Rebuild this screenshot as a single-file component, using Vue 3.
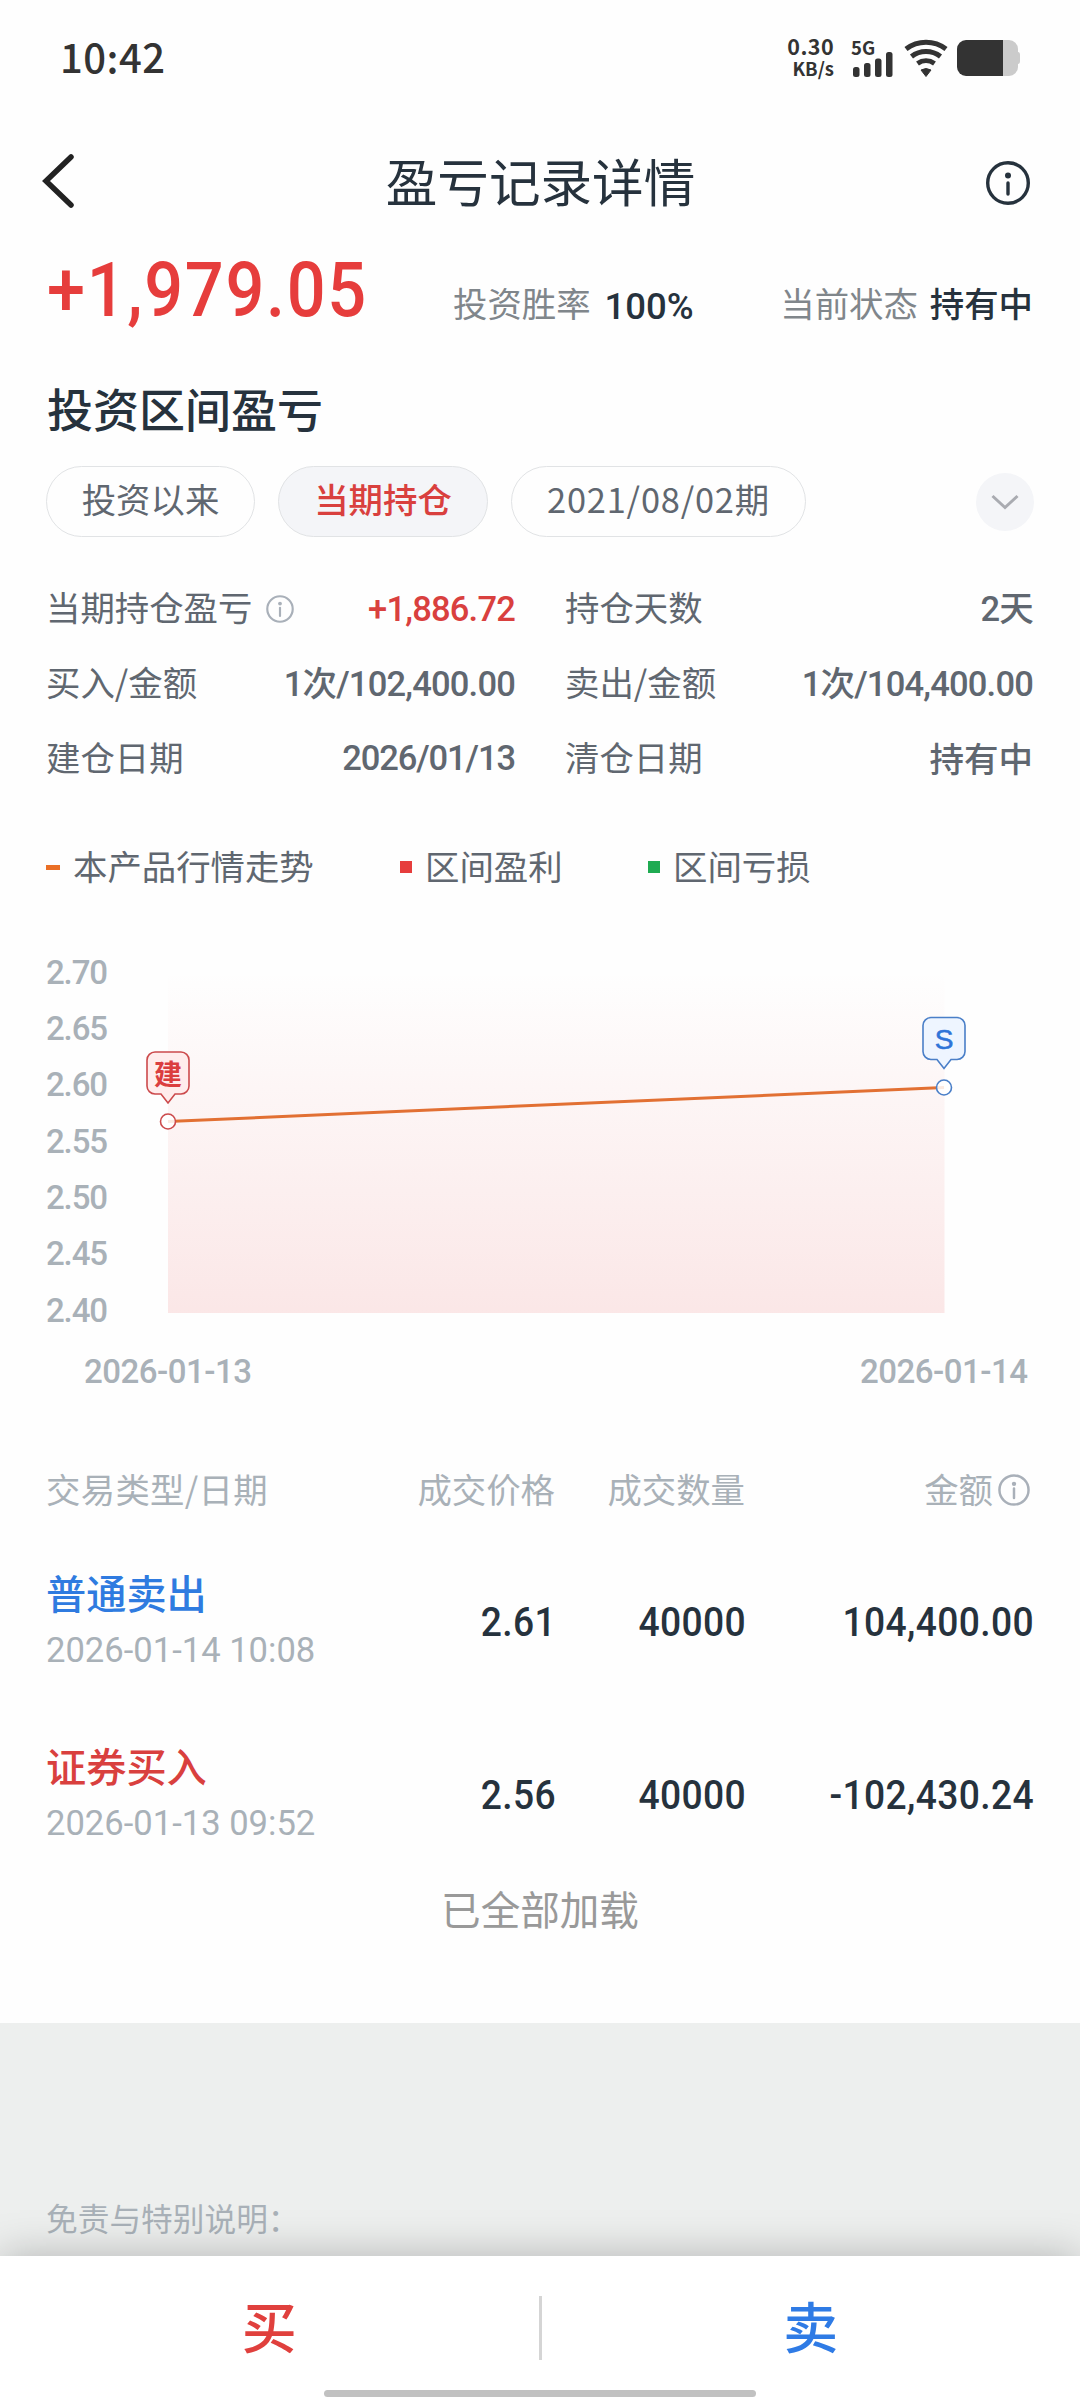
<template>
  <div class="page">
    <div class="status-bar">
      <span class="clock">10:42</span>
      <div class="speed">
        <span class="speed-num">0.30</span>
        <span class="speed-unit">KB/s</span>
      </div>
      <div class="signal">
        <span class="signal-type">5G</span>
        <svg width="42" height="40" viewBox="0 0 42 40">
          <rect x="2" y="29" width="6.500" height="10" rx="2.500" />
          <rect x="13" y="25" width="6.500" height="14" rx="2.500" />
          <rect x="24" y="20.500" width="6.500" height="18.500" rx="2.500" />
          <rect x="35" y="14" width="6.500" height="25" rx="2.500" />
        </svg>
      </div>
      <svg class="wifi" width="46" height="40" viewBox="0 0 46 40">
        <path d="M3 11a33 33 0 0 1 40 0M8.500 18.500a23.500 23.500 0 0 1 29 0M14.500 25.500a15 15 0 0 1 17 0" />
        <path class="wifi-dot" d="M18 32Q23 29 28 32L23 38.500Z" />
      </svg>
      <svg class="battery" width="64" height="36" viewBox="0 0 64 36">
        <path fill="#cbcbcb" d="M46 0h6a9 9 0 0 1 9 9v3q2 0 2 3v6q0 3-2 3v3a9 9 0 0 1-9 9h-6z" />
        <path fill="#333" d="M46 0H9a9 9 0 0 0-9 9v18a9 9 0 0 0 9 9h37z" />
      </svg>
    </div>

    <header class="nav">
      <svg class="back" width="34" height="56" viewBox="0 0 34 56">
        <path d="M30 4L5 28L30 52" />
      </svg>
      <h1>盈亏记录详情</h1>
      <svg class="info" width="44" height="44" viewBox="0 0 44 44">
        <circle cx="22" cy="22" r="20.300" />
        <path d="M22 22v11" />
        <circle class="dot" cx="22" cy="14.500" r="3" />
      </svg>
    </header>

    <section class="summary">
      <span class="total">+1,979.05</span>
      <span class="rate"><em>投资胜率</em><b>100%</b></span>
      <span class="state"><em>当前状态</em><b>持有中</b></span>
    </section>

    <h2>投资区间盈亏</h2>

    <div class="tabs">
      <span
        v-for="(tab, i) in tabs"
        :key="tab"
        class="tab"
        :class="{ active: i === current }"
        @click="current = i"
      >{{ tab }}</span>
      <span class="more">
        <svg width="30" height="16" viewBox="0 0 30 16"><path d="M2.500 2L15 13.500L27.500 2" /></svg>
      </span>
    </div>

    <div class="stats">
      <div v-for="item in stats" :key="item.label" class="stat">
        <span class="label">{{ item.label }}</span>
        <svg v-if="item.info" class="info small" width="28" height="28" viewBox="0 0 44 44">
          <circle cx="22" cy="22" r="20" />
          <path d="M22 20v13" />
          <circle class="dot" cx="22" cy="13.500" r="3" />
        </svg>
        <span class="value" :class="item.cls">{{ item.value }}</span>
      </div>
    </div>

    <div class="legend">
      <span class="trend"><i></i>本产品行情走势</span>
      <span class="profit"><i></i>区间盈利</span>
      <span class="loss"><i></i>区间亏损</span>
    </div>

    <svg class="chart" width="1080" height="460" viewBox="0 940 1080 460">
      <defs>
        <linearGradient id="area" x1="0" y1="0" x2="0" y2="1">
          <stop offset="0" stop-color="#e43c3c" stop-opacity="0" />
          <stop offset="1" stop-color="#e43c3c" stop-opacity="0.12" />
        </linearGradient>
      </defs>
      <rect x="168" y="970" width="776.500" height="343" fill="url(#area)" />
      <text
        v-for="(tick, i) in ticks"
        :key="tick"
        class="tick"
        x="46"
        :y="983.700 + i * 56.300"
        textLength="62"
      >{{ tick }}</text>
      <text class="tick" x="84" y="1383" textLength="168">2026-01-13</text>
      <text class="tick" x="860" y="1383" textLength="168">2026-01-14</text>
      <path class="line" d="M168 1121.500L944 1087.500" />
      <g class="buy">
        <circle cx="168" cy="1121.500" r="7.500" />
        <path d="M155 1052h26a8 8 0 0 1 8 8v26a8 8 0 0 1-8 8h-6l-7 9l-7-9h-6a8 8 0 0 1-8-8v-26a8 8 0 0 1 8-8z" />
        <text x="168" y="1085">建</text>
      </g>
      <g class="sell">
        <circle cx="944" cy="1087.500" r="7.500" />
        <path d="M931 1017.500h26a8 8 0 0 1 8 8v26a8 8 0 0 1-8 8h-6l-7 9l-7-9h-6a8 8 0 0 1-8-8v-26a8 8 0 0 1 8-8z" />
        <text x="944" y="1049">S</text>
      </g>
    </svg>

    <div class="table">
      <div class="row head">
        <span class="first">交易类型/日期</span>
        <span>成交价格</span>
        <span>成交数量</span>
        <span class="amount-head">金额
          <svg class="info small" width="32" height="32" viewBox="0 0 44 44">
            <circle cx="22" cy="22" r="20" />
            <path d="M22 20v13" />
            <circle class="dot" cx="22" cy="13.500" r="3" />
          </svg>
        </span>
      </div>
      <div v-for="row in rows" :key="row.time" class="row">
        <div class="first">
          <div class="name" :class="row.side">{{ row.name }}</div>
          <div class="time">{{ row.time }}</div>
        </div>
        <span class="num">{{ row.price }}</span>
        <span class="num">{{ row.count }}</span>
        <span class="num">{{ row.amount }}</span>
      </div>
      <div class="loaded">已全部加载</div>
    </div>

    <div class="notice">免责与特别说明：</div>

    <footer class="actions">
      <span class="buy-btn">买</span>
      <i></i>
      <span class="sell-btn">卖</span>
      <div class="home-bar"></div>
    </footer>
  </div>
</template>

<script setup>
import { ref } from 'vue';

const current = ref(1);
const tabs = ['投资以来', '当期持仓', '2021/08/02期'];

const stats = [
  { label: '当期持仓盈亏', value: '+1,886.72', info: true, cls: 'up' },
  { label: '持仓天数', value: '2天', cls: 'mixed' },
  { label: '买入/金额', value: '1次/102,400.00', cls: 'mixed' },
  { label: '卖出/金额', value: '1次/104,400.00', cls: 'mixed' },
  { label: '建仓日期', value: '2026/01/13', cls: 'date' },
  { label: '清仓日期', value: '持有中', cls: 'cjk' },
];

const ticks = ['2.70', '2.65', '2.60', '2.55', '2.50', '2.45', '2.40'];

const rows = [
  { name: '普通卖出', side: 'out', time: '2026-01-14 10:08', price: '2.61', count: '40000', amount: '104,400.00' },
  { name: '证券买入', side: 'in', time: '2026-01-13 09:52', price: '2.56', count: '40000', amount: '-102,430.24' },
];
</script>

<style>
body {
  margin: 0;
  background: #fefefe;
}
</style>

<style scoped>
.page {
  width: 1080px;
  height: 2400px;
  overflow: hidden;
  display: flex;
  flex-direction: column;
  background: #fefefe;
  color: #26323d;
  font-family: "Noto Sans CJK SC", sans-serif;
  font-size: 34.4px;
  white-space: nowrap;
}

.page svg {
  display: block;
  flex: none;
}

.status-bar {
  height: 116px;
  display: flex;
  align-items: center;
  padding: 0 59px 0 60px;
  color: #333;
}

.clock {
  font-size: 40px;
  line-height: 40px;
  font-weight: 500;
  letter-spacing: 0.5px;
  padding-bottom: 4px;
  flex: 1;
}

.speed {
  display: flex;
  flex-direction: column;
  align-items: flex-end;
  font-weight: 700;
  margin-right: 17px;
  padding-bottom: 3px;
}

.speed-num {
  font-size: 21.5px;
  line-height: 23px;
  letter-spacing: 0.4px;
}

.speed-unit {
  font-size: 18.5px;
  line-height: 22px;
}

.signal {
  position: relative;
  fill: #333;
  margin-right: 10px;
}

.signal-type {
  position: absolute;
  left: 0;
  top: -1px;
  font-size: 18.5px;
  line-height: 20px;
  font-weight: 700;
}

.wifi {
  fill: none;
  stroke: #333;
  stroke-width: 5;
  margin-right: 8px;
}

.wifi .wifi-dot {
  fill: #333;
  stroke-width: 1;
}

.nav {
  height: 134px;
  display: flex;
  align-items: center;
  padding: 0 50px 0 41px;
}

.back {
  fill: none;
  stroke: #222;
  stroke-width: 5.5;
  stroke-linecap: round;
  margin-top: -4px;
}

h1 {
  flex: 1;
  margin: -7px 0 0;
  padding-left: 20px;
  text-align: center;
  font-size: 51.6px;
  font-weight: 400;
  line-height: 60px;
}

.info {
  fill: none;
  stroke: #26323d;
  stroke-width: 3.4;
  stroke-linecap: round;
}

.info .dot {
  fill: #26323d;
  stroke: none;
}

.info.small {
  stroke: #a9b0b9;
}

.info.small .dot {
  fill: #a9b0b9;
}

.summary {
  height: 120px;
  display: flex;
  align-items: baseline;
  padding: 0 47px;
  line-height: 82px;
}

.total {
  font-family: Roboto, sans-serif;
  font-size: 76px;
  font-weight: 500;
  color: #e63d3c;
  letter-spacing: 1.9px;
  width: 406px;
  transform: translateY(-1px) scaleX(0.9);
  transform-origin: left;
}

.summary em {
  font-style: normal;
  color: #80868b;
  margin-right: 14px;
}

.summary b {
  font-weight: 500;
}

.rate b {
  display: inline-block;
  font-family: Roboto, sans-serif;
  font-size: 36.5px;
  transform: translateY(2px);
}

.state {
  margin-left: auto;
}

.state em {
  margin-right: 12px;
}

h2 {
  margin: 0;
  padding-left: 47px;
  font-size: 46px;
  font-weight: 500;
  height: 80px;
  line-height: 74px;
}

.tabs {
  display: flex;
  align-items: center;
  gap: 23px;
  margin-top: 16px;
  padding: 0 46px;
}

.tab {
  box-sizing: border-box;
  height: 71px;
  width: 209px;
  border: 1px solid #e1e3e5;
  border-radius: 36px;
  text-align: center;
  line-height: 63px;
  color: #606770;
}

.tab:nth-child(2) {
  width: 210px;
}

.tab:nth-child(3) {
  width: 295px;
  letter-spacing: 0.8px;
}

.tab.active {
  background: #f4f5f8;
  color: #d9403e;
  font-weight: 500;
}

.more {
  width: 58px;
  height: 58px;
  margin-left: auto;
  border-radius: 50%;
  background: #f4f5f8;
  display: flex;
  align-items: center;
  justify-content: center;
}

.more svg {
  fill: none;
  stroke: #a9abb1;
  stroke-width: 3;
}

.stats {
  display: grid;
  grid-template-columns: 469px 468px;
  column-gap: 50px;
  grid-auto-rows: 75px;
  margin-top: 33px;
  padding: 0 46px;
  color: #606770;
}

.stat {
  display: flex;
  align-items: center;
}

.stat .label {
  padding-bottom: 4px;
}

.stat .info {
  margin-left: 14px;
  margin-top: 3px;
}

.stat .value {
  margin-left: auto;
  font-family: Roboto, "Noto Sans CJK SC", sans-serif;
  font-size: 34.5px;
  font-weight: 500;
  letter-spacing: -0.8px;
}

.stat .up {
  color: #d9403e;
  padding-top: 2px;
}

.stat .mixed {
  padding-bottom: 3px;
}

.stat .date {
  letter-spacing: -1.1px;
  padding-top: 1px;
}

.stat .cjk {
  letter-spacing: 0;
  padding-bottom: 2px;
}

.legend {
  display: flex;
  height: 60px;
  align-items: center;
  margin-top: 40px;
  margin-bottom: 2px;
  padding-left: 46px;
  color: #606770;
}

.legend span {
  display: flex;
  align-items: center;
}

.legend i {
  width: 12px;
  height: 12px;
  margin-right: 13px;
  margin-top: 4px;
}

.trend {
  width: 354px;
}

.legend .trend i {
  width: 14px;
  height: 5px;
  background: #ea6f26;
}

.profit {
  width: 248px;
}

.profit i {
  background: #e63d3c;
}

.loss i {
  background: #1fab52;
}

.chart {
  margin-top: 43px;
}

.tick {
  font-family: Roboto, sans-serif;
  font-size: 33px;
  font-weight: 500;
  fill: #a9b1b8;
}

.line {
  fill: none;
  stroke: #e27033;
  stroke-width: 3;
}

.chart g {
  stroke-width: 1.6;
}

.chart .buy {
  stroke: #cc4a4c;
  fill: #ffecec;
}

.chart .sell {
  stroke: #4a7fc8;
  fill: #eef5ff;
}

.chart g circle {
  fill: #fff;
  fill-opacity: 0.85;
}

.chart g text {
  stroke: none;
  text-anchor: middle;
  font-size: 28px;
  font-weight: 700;
  fill: #db3e3f;
}

.chart g.sell text {
  font-family: "Liberation Sans", sans-serif;
  font-size: 28px;
  font-weight: 400;
  fill: #2f74d8;
  stroke: #2f74d8;
  stroke-width: 0.6;
}

.table {
  height: 623px;
  padding: 0 46px;
}

.row {
  display: grid;
  grid-template-columns: 300px 209px 190px 288px;
  height: 173px;
  align-items: center;
  text-align: right;
}

.num {
  font-family: Roboto, sans-serif;
  font-size: 40px;
  font-weight: 500;
  letter-spacing: 0.4px;
  padding-top: 2px;
  transform: translateX(1px) scaleX(0.93);
  transform-origin: right;
}

.row.head {
  height: 90px;
  margin-top: 43px;
  margin-bottom: 2px;
  color: #a9b1b8;
}

.first {
  text-align: left;
}

.head .first {
  letter-spacing: 0.3px;
}

.amount-head {
  display: flex;
  align-items: center;
  justify-content: flex-end;
  gap: 5px;
  padding-right: 3px;
}

.amount-head svg {
  margin-top: 3px;
}

.name {
  font-size: 40.2px;
  font-weight: 500;
  line-height: 52px;
  padding-bottom: 3px;
}

.name.out {
  color: #2f7be0;
}

.name.in {
  color: #d9403e;
}

.time {
  font-family: Roboto, sans-serif;
  font-size: 34.6px;
  line-height: 54px;
  padding-top: 2px;
  color: #a9b1b8;
}

.loaded {
  text-align: center;
  font-size: 39.6px;
  line-height: 54px;
  color: #999;
}

.notice {
  box-sizing: border-box;
  height: 233px;
  padding: 171px 0 0 46px;
  background: #edefee;
  color: #a9b1b8;
  font-size: 31.7px;
  line-height: 47px;
}

.actions {
  position: relative;
  flex: 1;
  display: flex;
  background: #fff;
  box-shadow: 0 0 40px rgba(0, 0, 0, 0.25);
}

.actions span {
  flex: 1;
  text-align: center;
  font-size: 55px;
  font-weight: 500;
  line-height: 136px;
}

.actions i {
  width: 3px;
  height: 64px;
  margin-top: 40px;
  background: #d5d5d5;
}

.buy-btn {
  color: #e0403d;
}

.sell-btn {
  color: #2f7be5;
}

.home-bar {
  position: absolute;
  left: 324px;
  bottom: 3px;
  width: 432px;
  height: 7px;
  border-radius: 4px;
  background: #c1c1c1;
}
</style>
